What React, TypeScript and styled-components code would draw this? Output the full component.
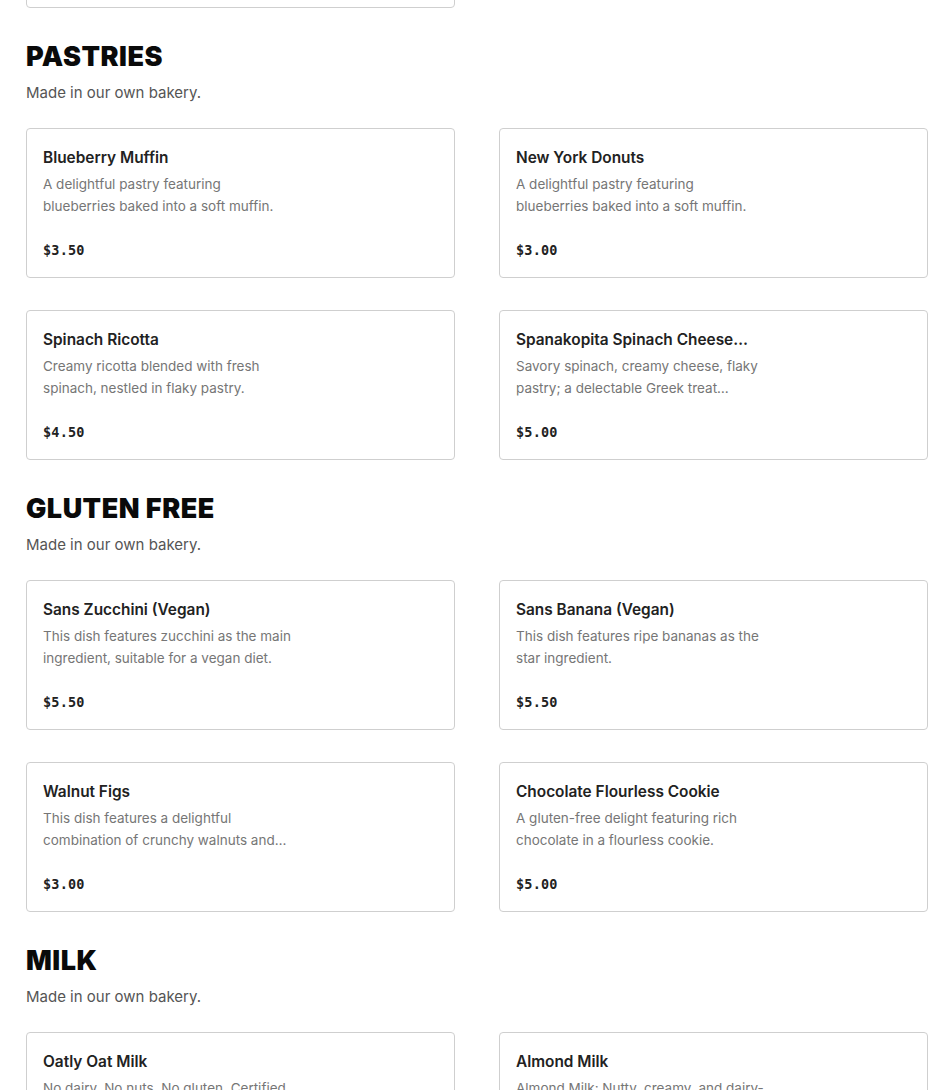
import React from "react";
import styled, { createGlobalStyle } from "styled-components";

const Global = createGlobalStyle`
  html, body { margin: 0; padding: 0; background: #ffffff; overflow: hidden; }
  body { font-family: Inter, "Noto Sans", "Liberation Sans", sans-serif; color: #222; }
`;

const Page = styled.main`
  margin-top: -142px;
  padding: 0 22px 0 26px;
  display: flex;
  flex-direction: column;
  gap: 33px;
`;

const Section = styled.section`
  display: flex;
  flex-direction: column;
`;

const Heading = styled.h2`
  margin: 0;
  font-family: Inter, "Liberation Sans", sans-serif;
  font-weight: 900;
  font-size: 27px;
  line-height: 32px;
  letter-spacing: 0.5px;
  color: #0a0a0a;
  text-transform: uppercase;
`;

const Subtitle = styled.p`
  margin: 9px 0 24px;
  font-size: 15px;
  line-height: 22px;
  color: #555;
`;

const Grid = styled.div`
  display: grid;
  grid-template-columns: 1fr 1fr;
  column-gap: 44px;
  row-gap: 32px;
`;

const Card = styled.article`
  box-sizing: border-box;
  height: 150px;
  border: 1px solid #cfcfcf;
  border-radius: 4px;
  padding: 18px 16px 16px;
  display: flex;
  flex-direction: column;
  background: #fff;
`;

const Info = styled.div`
  width: 250px;
  display: flex;
  flex-direction: column;
`;

const Title = styled.h3`
  margin: 0;
  max-width: 233px;
  font-size: 15.4px;
  line-height: 22px;
  font-weight: 600;
  color: #222;
  white-space: nowrap;
  overflow: hidden;
  text-overflow: ellipsis;
`;

const Desc = styled.p`
  margin: 4px 0 0;
  font-size: 13.5px;
  line-height: 22px;
  color: #767676;
  display: -webkit-box;
  -webkit-line-clamp: 2;
  -webkit-box-orient: vertical;
  overflow: hidden;
  height: 44px;
`;

const Price = styled.span`
  margin-top: 23px;
  font-family: "DejaVu Sans Mono", "Liberation Mono", monospace;
  font-weight: 700;
  font-size: 13.5px;
  line-height: 20px;
  letter-spacing: 0.2px;
  color: #222;
`;

type Item = { name: string; desc: string; price: string };
type Sec = { title?: string; subtitle?: string; items: Item[] };

const sections: Sec[] = [
  {
    items: [
      {
        name: "Cinnamon Roll",
        desc: "A soft swirl of dough with cinnamon sugar and a sweet glaze.",
        price: "$4.00",
      },
    ],
  },
  {
    title: "Pastries",
    subtitle: "Made in our own bakery.",
    items: [
      {
        name: "Blueberry Muffin",
        desc: "A delightful pastry featuring blueberries baked into a soft muffin.",
        price: "$3.50",
      },
      {
        name: "New York Donuts",
        desc: "A delightful pastry featuring blueberries baked into a soft muffin.",
        price: "$3.00",
      },
      {
        name: "Spinach Ricotta",
        desc: "Creamy ricotta blended with fresh spinach, nestled in flaky pastry.",
        price: "$4.50",
      },
      {
        name: "Spanakopita Spinach Cheese Pie",
        desc: "Savory spinach, creamy cheese, flaky pastry; a delectable Greek treat bursting with flavor.",
        price: "$5.00",
      },
    ],
  },
  {
    title: "Gluten Free",
    subtitle: "Made in our own bakery.",
    items: [
      {
        name: "Sans Zucchini (Vegan)",
        desc: "This dish features zucchini as the main ingredient, suitable for a vegan diet.",
        price: "$5.50",
      },
      {
        name: "Sans Banana (Vegan)",
        desc: "This dish features ripe bananas as the star ingredient.",
        price: "$5.50",
      },
      {
        name: "Walnut Figs",
        desc: "This dish features a delightful combination of crunchy walnuts and sweet figs.",
        price: "$3.00",
      },
      {
        name: "Chocolate Flourless Cookie",
        desc: "A gluten-free delight featuring rich chocolate in a flourless cookie.",
        price: "$5.00",
      },
    ],
  },
  {
    title: "Milk",
    subtitle: "Made in our own bakery.",
    items: [
      {
        name: "Oatly Oat Milk",
        desc: "No dairy. No nuts. No gluten. Certified vegan and climate friendly.",
        price: "$0.75",
      },
      {
        name: "Almond Milk",
        desc: "Almond Milk: Nutty, creamy, and dairy-free for your coffee.",
        price: "$0.75",
      },
    ],
  },
];

export default function App() {
  return (
    <>
      <Global />
      <Page>
        {sections.map((s, i) => (
          <Section key={i}>
            {s.title && <Heading>{s.title}</Heading>}
            {s.subtitle && <Subtitle>{s.subtitle}</Subtitle>}
            <Grid>
              {s.items.map((it) => (
                <Card key={it.name}>
                  <Info>
                    <Title>{it.name}</Title>
                    <Desc>{it.desc}</Desc>
                  </Info>
                  <Price>{it.price}</Price>
                </Card>
              ))}
            </Grid>
          </Section>
        ))}
      </Page>
    </>
  );
}
